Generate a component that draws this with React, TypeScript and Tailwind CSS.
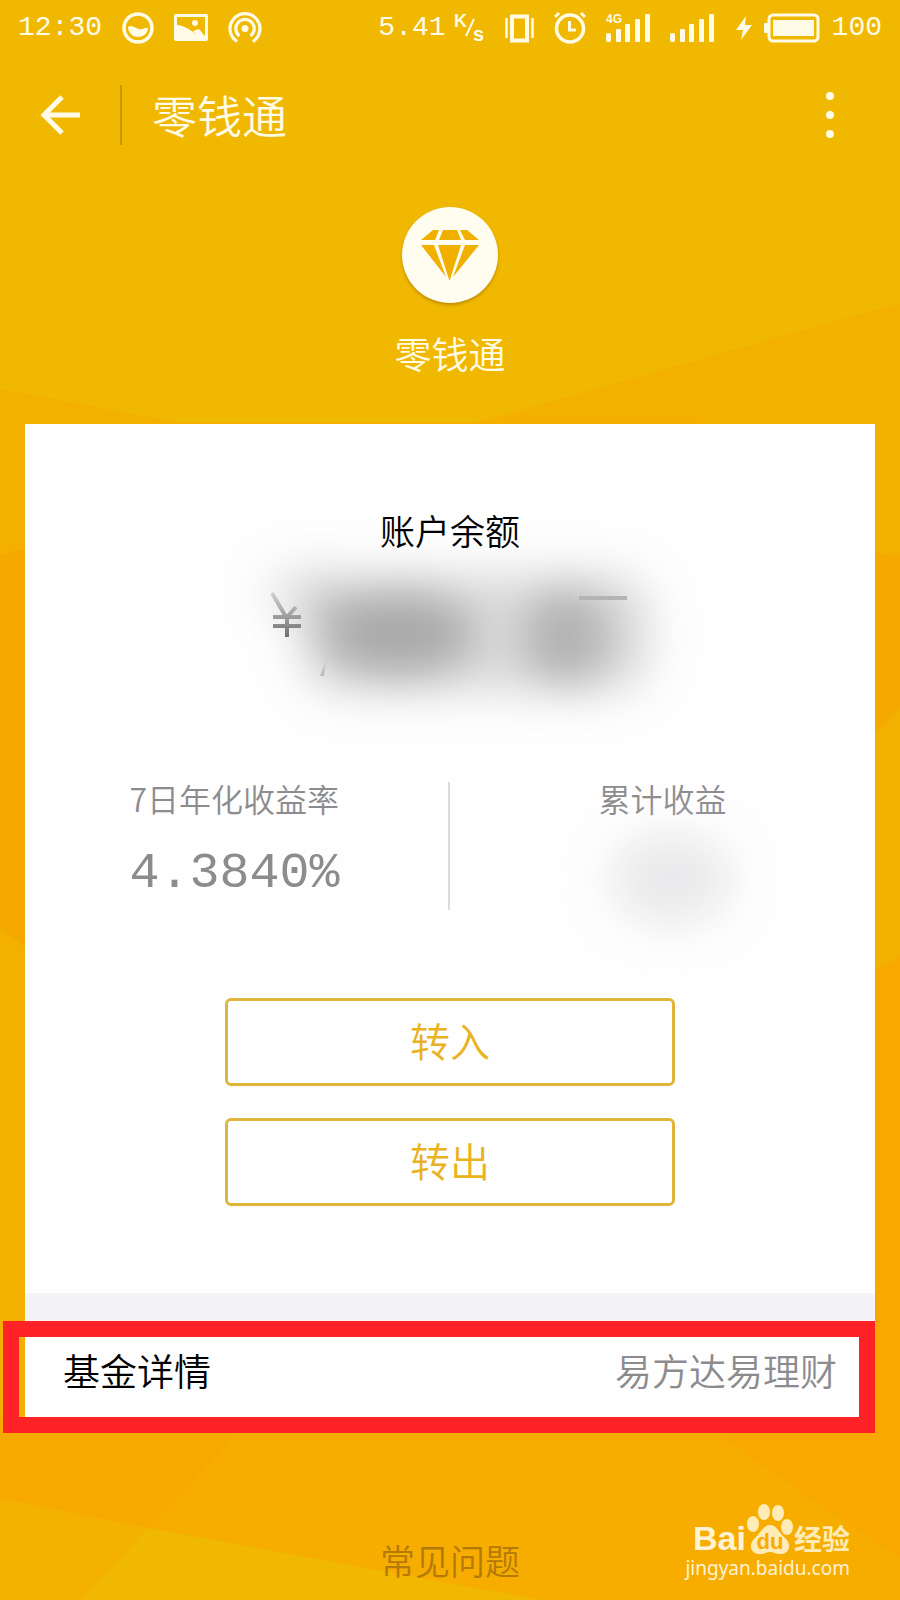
import React from 'react';

function Backdrop() {
  return (
    <svg className="absolute inset-0 h-full w-full" viewBox="0 0 900 1600" preserveAspectRatio="none" aria-hidden="true">
      <rect width="900" height="1600" fill="#f7ad00" />
      <path d="M0 0H900V303L475 423H180L0 389Z" fill="#f1b801" />
      <path d="M900 303L475 423H700V700H900Z" fill="#f4b001" />
      <path d="M0 389L180 423V700H0Z" fill="#f4b001" />
      <path d="M0 555L60 539V972L0 929Z" fill="#f5a900" />
      <path d="M840 547L900 556V707L840 770Z" fill="#f5a900" />
      <path d="M840 770L900 707V958L840 986Z" fill="#f3b001" />
      <path d="M0 929L60 972V1420H0Z" fill="#f3b001" />
      <path d="M900 958L840 986V1400L720 1437L900 1558Z" fill="#f8a800" />
      <path d="M0 1420H250L148 1528L0 1498Z" fill="#f8a900" />
      <path d="M0 1498L148 1528L82 1600H0Z" fill="#f4b101" />
      <path d="M148 1528L540 1600H82Z" fill="#f1b801" />
    </svg>
  );
}

function Signal({ network }: { network?: string }) {
  return (
    <svg className="h-8 w-11 shrink-0" viewBox="0 0 44 32" fill="currentColor" aria-hidden="true">
      {network && (
        <text x="0" y="11" fontSize="12" fontWeight="700" fontFamily="Liberation Sans, sans-serif">{network}</text>
      )}
      <rect x="0" y="21" width="5" height="9" rx="2" />
      <rect x="10" y="17" width="5" height="13" rx="1" />
      <rect x="19" y="12" width="5" height="18" rx="1" />
      <rect x="29" y="7" width="5" height="23" rx="1" />
      <rect x="39" y="2" width="5" height="28" rx="1" />
    </svg>
  );
}

function StatusBar() {
  return (
    <div className="flex h-14 items-center justify-between pl-[18px] pr-[18px] font-['Liberation_Mono',monospace] text-[28px]">
      <div className="flex items-center gap-5">
        <span>12:30</span>
        <svg className="h-8 w-8" viewBox="0 0 32 32" fill="none" stroke="currentColor" aria-hidden="true">
          <circle cx="16" cy="16" r="14" strokeWidth="3.5" />
          <path d="M6 15c4-3 7 1 11 2s6-2 9-1c0 5-4 9-10 9S6 20 6 15Z" fill="currentColor" stroke="none" />
        </svg>
        <svg className="h-8 w-[34px]" viewBox="0 0 34 32" aria-hidden="true">
          <rect y="2" width="34" height="27" rx="2" fill="currentColor" />
          <path d="M3 5H31V24L25 17L19 19L24 25C18 18 10 14 3 13Z" fill="#f1b801" />
          <path d="M3 13C10 14 18 18 24 25H3Z" fill="currentColor" />
          <circle cx="21" cy="11" r="3" fill="currentColor" />
        </svg>
        <svg className="h-8 w-[34px]" viewBox="0 0 34 32" fill="none" stroke="currentColor" strokeWidth="3.2" aria-hidden="true">
          <path d="M9.200 29.500A15 15 0 1 1 24.800 29.500" />
          <path d="M11.500 24A9.200 9.200 0 1 1 22.500 24" />
          <circle cx="17" cy="16.500" r="3.500" fill="currentColor" stroke="none" />
        </svg>
      </div>
      <div className="flex items-center">
        <span>5.41</span>
        <svg className="ml-2 h-8 w-8" viewBox="0 0 32 32" fill="currentColor" fontFamily="Liberation Sans, sans-serif" fontWeight="700" aria-hidden="true">
          <text x="0" y="15" fontSize="18">K</text>
          <path d="M12 24L20 7" stroke="currentColor" strokeWidth="2" />
          <text x="19" y="29" fontSize="20">s</text>
        </svg>
        <svg className="ml-[18px] h-8 w-8" viewBox="0 0 32 32" aria-hidden="true">
          <rect x="8" y="4.500" width="15" height="24" fill="none" stroke="currentColor" strokeWidth="4" />
          <path d="M2.500 6V26M28.500 6V26" stroke="currentColor" strokeWidth="2.500" />
        </svg>
        <svg className="ml-[18px] h-8 w-8" viewBox="0 0 32 32" fill="none" stroke="currentColor" aria-hidden="true">
          <circle cx="16" cy="16.500" r="13.500" strokeWidth="3.500" />
          <path d="M15.500 9V18H22" strokeWidth="3" />
          <path d="M1 5L5 1M31 5L27 1" strokeWidth="3" />
        </svg>
        <span className="ml-5 flex"><Signal network="4G" /></span>
        <span className="ml-5 flex"><Signal /></span>
        <svg className="ml-[22px] h-8 w-4" viewBox="0 0 16 32" fill="currentColor" aria-hidden="true">
          <path d="M10 4L0 18H7L5 28L16 13H9Z" />
        </svg>
        <svg className="ml-3 h-8 w-14" viewBox="0 0 56 32" aria-hidden="true">
          <rect x="5" y="3" width="49" height="26" rx="4" fill="none" stroke="currentColor" strokeWidth="3" />
          <rect x="9" y="8" width="41" height="16" fill="currentColor" />
          <rect x="0" y="11" width="4" height="10" rx="1" fill="currentColor" />
        </svg>
        <span className="ml-3">100</span>
      </div>
    </div>
  );
}

function TitleBar() {
  return (
    <header className="flex h-[118px] items-center pl-10 pr-[66px]">
      <button type="button" aria-label="返回" className="flex">
        <svg className="h-10 w-10" viewBox="0 0 40 40" fill="none" stroke="currentColor" strokeWidth="5" aria-hidden="true">
          <path d="M22 2L4 20L22 38M3 20H41" />
        </svg>
      </button>
      <span className="ml-10 h-[60px] w-[2px] bg-[#c99600]" />
      <h1 className="ml-[30px] text-[45px] leading-[60px]">零钱通</h1>
      <button type="button" aria-label="更多" className="ml-auto flex flex-col gap-[11px]">
        <span className="h-2 w-2 rounded-full bg-current" />
        <span className="h-2 w-2 rounded-full bg-current" />
        <span className="h-2 w-2 rounded-full bg-current" />
      </button>
    </header>
  );
}

function HiddenBalance() {
  return (
    <svg className="h-[180px] w-[440px] max-w-full overflow-visible" viewBox="-10 16 440 180" role="img" aria-label="余额已隐藏">
      <defs>
        <filter id="haze" x="-50%" y="-100%" width="200%" height="300%" colorInterpolationFilters="sRGB">
          <feGaussianBlur stdDeviation="22" />
        </filter>
        <linearGradient id="fade" gradientUnits="userSpaceOnUse" x1="0" y1="53" x2="0" y2="97">
          <stop offset="0" stopColor="#d0d0d0" />
          <stop offset="1" stopColor="#707072" />
        </linearGradient>
      </defs>
      <g filter="url(#haze)" fill="#7c7c7e">
        <rect x="60" y="34" width="350" height="118" rx="40" opacity=".28" />
        <ellipse cx="158" cy="94" rx="76" ry="42" opacity=".52" />
        <ellipse cx="326" cy="97" rx="42" ry="48" opacity=".44" />
        <ellipse cx="64" cy="54" rx="40" ry="30" opacity=".16" />
      </g>
      <path d="M32 53L46 77M56 67L47 77M47 77V97M33 77H61M33 86H61" fill="none" stroke="url(#fade)" strokeWidth="4" />
      <path d="M94 100L80 136H84L85 124Z" fill="#bdbdbd" />
      <rect x="339" y="56" width="48" height="4" fill="#b4b4b4" />
    </svg>
  );
}

function HiddenIncome() {
  return (
    <svg className="h-[130px] w-[160px] overflow-visible" viewBox="0 0 160 130" role="img" aria-label="收益已隐藏">
      <defs>
        <filter id="haze-small" x="-100%" y="-100%" width="300%" height="300%" colorInterpolationFilters="sRGB">
          <feGaussianBlur stdDeviation="20" />
        </filter>
      </defs>
      <ellipse cx="88" cy="55" rx="60" ry="46" fill="#eae9eb" filter="url(#haze-small)" />
    </svg>
  );
}

function TransferButton({ label }: { label: string }) {
  return (
    <button type="button" className="h-[88px] w-full rounded-md border-3 border-[#dfb53a] pb-1 text-[40px] leading-none text-[#e9b320]">
      {label}
    </button>
  );
}

function Watermark() {
  return (
    <div className="absolute bottom-5 right-[50px] flex flex-col items-end font-normal text-[#fff3d5]">
      <div className="flex h-14 items-end">
        <span className="font-['Liberation_Sans',sans-serif] text-[34px] font-bold leading-9">Bai</span>
        <svg className="h-[54px] w-12 shrink-0" viewBox="0 0 48 54" aria-hidden="true">
          <g fill="#ffebb5">
            <ellipse cx="7" cy="22" rx="6" ry="8" />
            <ellipse cx="18" cy="10" rx="6" ry="8" />
            <ellipse cx="32" cy="11" rx="6" ry="8" />
            <ellipse cx="41" cy="25" rx="6" ry="8" />
            <path d="M24 23C31 23 33 31 39 36C46 42 44 52 34 52C29 52 28 50 24 50S19 52 14 52C4 52 2 42 9 36C15 31 17 23 24 23Z" />
          </g>
          <text x="24" y="47" textAnchor="middle" fontSize="22" fontWeight="700" fontFamily="Liberation Sans, sans-serif" fill="#f7ad00">du</text>
        </svg>
        <span className="text-[28px] font-bold leading-9 text-[#ffebb5]">经验</span>
      </div>
      <span className="font-['Noto_Sans',sans-serif] text-[19px] leading-6">jingyan.baidu.com</span>
    </div>
  );
}

export default function App() {
  return (
    <div className="relative min-h-screen bg-[#f7ad00] font-['Noto_Sans_CJK_SC',sans-serif] font-[350]">
      <Backdrop />
      <div className="relative flex min-h-screen flex-col">
        <div className="text-[#fffbe6]">
          <StatusBar />
          <TitleBar />
          <div className="flex flex-col items-center pt-[33px]">
            <div className="flex h-24 w-24 items-center justify-center rounded-full bg-[#fffcf0] shadow-[0_2px_3px_rgba(140,100,0,0.5)]">
              <svg className="h-[52px] w-[58px]" viewBox="0 0 58 52" fill="#f1b000" aria-hidden="true">
                <path d="M12 1H18L14 11H0ZM22 1H36L40 11H18ZM39 1H46L58 11H44ZM0 16H13L25 48ZM17 16H40L28.500 52ZM44 16H58L32 48Z" />
              </svg>
            </div>
            <p className="mt-[22px] text-[37px] leading-[56px]">零钱通</p>
          </div>
        </div>

        <main className="mx-[25px] mt-[43px] bg-[#fefefe] text-[#8c8c8e]">
          <section className="flex flex-col items-center pt-20">
            <h2 className="text-[35px] leading-[52px] text-black">账户余额</h2>
            <HiddenBalance />
          </section>
          <section className="mt-[46px] grid grid-cols-2">
            <div className="flex h-32 flex-col items-center border-r-2 border-[#dcdcdc]">
              <div className="-mt-[10px] pr-1">
                <h3 className="text-[32px] leading-[52px]">7日年化收益率</h3>
                <p className="font-['Liberation_Mono',monospace] text-[50px] leading-[100px]">4.3840%</p>
              </div>
            </div>
            <div className="flex h-32 flex-col items-center">
              <h3 className="-mt-[10px] text-[32px] leading-[52px]">累计收益</h3>
              <HiddenIncome />
            </div>
          </section>
          <div className="mx-[200px] mt-[88px] flex flex-col gap-8 pb-[87px]">
            <TransferButton label="转入" />
            <TransferButton label="转出" />
          </div>
        </main>

        <section className="mx-[25px] h-7 bg-[#f4f3f6]" />
        <section className="relative mx-[25px] bg-[#fefefe]">
          <a href="#fund" className="flex h-[112px] items-center justify-between pl-[38px] pr-[38px] pb-[14px] text-[37px] leading-[56px] text-black">
            <span>基金详情</span>
            <span className="text-[#8c8c8e]">易方达易理财</span>
          </a>
          <div className="pointer-events-none absolute -left-[22px] right-0 top-0 bottom-0 border-16 border-[#ff2328]" />
        </section>

        <footer className="flex flex-1 items-end justify-center pb-[14px] pt-20">
          <a href="#faq" className="text-[35px] leading-[52px] text-[#b47a08]">常见问题</a>
        </footer>
        <Watermark />
      </div>
    </div>
  );
}
